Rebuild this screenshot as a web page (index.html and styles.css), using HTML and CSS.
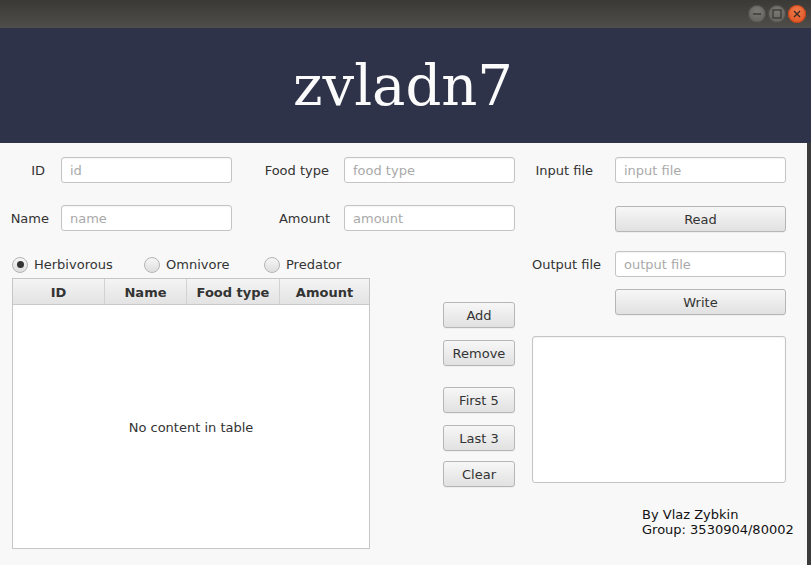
FILE: index.html
```html
<!DOCTYPE html>
<html lang="en">
<head>
<meta charset="utf-8">
<title>zvladn7</title>
<link rel="stylesheet" href="styles.css">
</head>
<body>
<div class="titlebar">
  <div class="winbtns">
    <span class="wb wb-min"><svg width="18" height="18" viewBox="0 0 18 18"><path d="M5 9h8" stroke="#3a3935" stroke-width="1.4" fill="none"/></svg></span>
    <span class="wb wb-max"><svg width="18" height="18" viewBox="0 0 18 18"><rect x="5" y="5" width="8" height="8" stroke="#3a3935" stroke-width="1.3" fill="none"/></svg></span>
    <span class="wb wb-close"><svg width="18" height="18" viewBox="0 0 18 18"><path d="M6 6l6 6M12 6l-6 6" stroke="#3a2a22" stroke-width="1.4" fill="none"/></svg></span>
  </div>
</div>
<header class="banner"><h1>zvladn7</h1></header>
<main class="content">
  <div class="form-grid">
    <label class="lbl lbl-id">ID</label>
    <input class="field" placeholder="id">
    <label class="lbl lbl-2">Food type</label>
    <input class="field" placeholder="food type">
    <label class="lbl lbl-3">Input file</label>
    <input class="field" placeholder="input file">

    <label class="lbl lbl-name">Name</label>
    <input class="field" placeholder="name">
    <label class="lbl lbl-amt">Amount</label>
    <input class="field" placeholder="amount">
    <span></span>
    <button class="btn btn-read">Read</button>
  </div>

  <div class="lower">
    <section class="left">
      <div class="radios">
        <label class="radio r-herb"><span class="dot on"></span>Herbivorous</label>
        <label class="radio r-omni"><span class="dot"></span>Omnivore</label>
        <label class="radio"><span class="dot"></span>Predator</label>
      </div>
      <div class="table">
        <div class="thead">
          <div class="th c1">ID</div>
          <div class="th c2">Name</div>
          <div class="th c3">Food type</div>
          <div class="th c4">Amount</div>
        </div>
        <div class="tbody">No content in table</div>
      </div>
    </section>

    <section class="mid">
      <button class="btn b-add">Add</button>
      <button class="btn b-remove">Remove</button>
      <button class="btn b-first">First 5</button>
      <button class="btn b-last">Last 3</button>
      <button class="btn b-clear">Clear</button>
    </section>

    <section class="right">
      <div class="out-row">
        <label class="lbl out-lbl">Output file</label>
        <input class="field out-field" placeholder="output file">
      </div>
      <button class="btn btn-write">Write</button>
      <textarea class="area"></textarea>
      <div class="credits">By Vlaz Zybkin<br>Group: 3530904/80002</div>
    </section>
  </div>
</main>
</body>
</html>
```

FILE: styles.css
```css
html, body {
  margin: 0;
  padding: 0;
}
body {
  width: 811px;
  height: 565px;
  overflow: hidden;
  background: #3b3b3b;
  font-family: "DejaVu Sans", sans-serif;
  font-size: 13px;
  color: #333;
}
.titlebar {
  height: 28px;
  background: linear-gradient(#3a3935, #4f4e4a);
  display: flex;
  justify-content: flex-end;
  align-items: center;
}
.winbtns {
  display: flex;
  gap: 2px;
  margin-right: 5px;
}
.wb {
  width: 18px;
  height: 18px;
  border-radius: 50%;
  display: flex;
  align-items: center;
  justify-content: center;
  background: radial-gradient(circle at 50% 35%, #7a7974, #5c5b56);
  box-shadow: inset 0 0 0 1px #4a4945;
}
.wb-close {
  background: radial-gradient(circle at 50% 35%, #f07a4a, #dd4d1c);
  box-shadow: inset 0 0 0 1px #c2451a;
}
.banner {
  height: 115px;
  background: #2e3349;
  box-sizing: border-box;
  padding-top: 25px;
}
.banner h1 {
  margin: 0;
  text-align: center;
  font-family: "DejaVu Serif", serif;
  font-weight: normal;
  font-size: 56px;
  line-height: 65px;
  color: #fbfbfb;
  padding-right: 5px;
}
.content {
  width: 807px;
  height: 422px;
  background: #f8f8f8;
  box-sizing: border-box;
  padding-top: 14px;
}
.form-grid {
  display: grid;
  grid-template-columns: 61px 171px 112px 171px 100px 171px;
  grid-auto-rows: 26px;
  row-gap: 22px;
  align-items: center;
}
.lbl {
  justify-self: end;
  color: #333;
  white-space: nowrap;
}
.lbl-id { margin-right: 16px; }
.lbl-name { margin-right: 12px; }
.lbl-2 { margin-right: 15px; }
.lbl-amt { margin-right: 14px; }
.lbl-3 { margin-right: 22px; }
.field {
  height: 26px;
  box-sizing: border-box;
  border: 1px solid #c4c4c4;
  border-radius: 3px;
  background: #fff;
  box-shadow: inset 0 1px 1px rgba(0,0,0,0.05);
  font-family: "DejaVu Sans", sans-serif;
  font-size: 13px;
  color: #333;
  padding: 0 8px;
  outline: none;
  width: 100%;
}
.field::placeholder {
  color: #a9a9a9;
}
.btn {
  height: 26px;
  box-sizing: border-box;
  border: 1px solid #b6b6b6;
  border-radius: 3px;
  background: linear-gradient(#f7f7f7, #e1e1e1);
  box-shadow: 0 1px 0 rgba(0,0,0,0.04);
  font-family: "DejaVu Sans", sans-serif;
  font-size: 13px;
  color: #333;
  padding: 0;
}
.btn-read {
  width: 171px;
  margin-top: 2px;
}
.lower {
  display: flex;
  margin-top: 20px;
}
.left {
  margin-left: 12px;
  width: 358px;
}
.radios {
  height: 27px;
  display: flex;
  align-items: center;
}
.radio {
  display: flex;
  align-items: center;
  gap: 6px;
  color: #333;
}
.r-herb { width: 132px; }
.r-omni { width: 120px; }
.dot {
  width: 16px;
  height: 16px;
  box-sizing: border-box;
  border-radius: 50%;
  border: 1px solid #b4b4b4;
  background: linear-gradient(#f6f6f6, #dedede);
  display: flex;
  align-items: center;
  justify-content: center;
}
.dot.on::after {
  content: "";
  width: 7px;
  height: 7px;
  border-radius: 50%;
  background: #333;
}
.table {
  height: 271px;
  box-sizing: border-box;
  border: 1px solid #c6c6c6;
  background: #fff;
  display: flex;
  flex-direction: column;
}
.thead {
  display: flex;
  height: 26px;
  flex: none;
  background: linear-gradient(#f4f4f4, #e3e3e3);
  border-bottom: 1px solid #c9c9c9;
  box-sizing: border-box;
}
.th {
  font-weight: bold;
  color: #333;
  display: flex;
  align-items: center;
  justify-content: center;
  border-right: 1px solid #d2d2d2;
  box-sizing: border-box;
  padding-top: 1px;
}
.c1 { width: 92px; }
.c2 { width: 82px; }
.c3 { width: 93px; }
.c4 { flex: 1; border-right: none; }
.tbody {
  flex: 1;
  display: flex;
  align-items: center;
  justify-content: center;
  color: #333;
  padding-top: 1px;
}
.mid {
  margin-left: 73px;
  width: 72px;
  display: flex;
  flex-direction: column;
}
.mid .btn { width: 72px; }
.b-add { margin-top: 51px; }
.b-remove { margin-top: 12px; }
.b-first { margin-top: 21px; }
.b-last { margin-top: 12px; }
.b-clear { margin-top: 10px; }
.right {
  margin-left: 17px;
  width: 254px;
  display: flex;
  flex-direction: column;
}
.out-row {
  display: flex;
  align-items: center;
  height: 26px;
  justify-content: space-between;
}
.out-lbl { justify-self: auto; }
.out-field { width: 171px; }
.btn-write {
  width: 171px;
  margin-top: 12px;
  margin-left: 83px;
}
.area {
  margin-top: 21px;
  height: 147px;
  width: 254px;
  box-sizing: border-box;
  border: 1px solid #c4c4c4;
  border-radius: 3px;
  background: #fff;
  box-shadow: inset 0 1px 2px rgba(0,0,0,0.06);
  resize: none;
  outline: none;
  display: block;
}
.credits {
  margin-top: 24px;
  margin-left: 110px;
  line-height: 15px;
  color: #111;
  white-space: nowrap;
}
```
